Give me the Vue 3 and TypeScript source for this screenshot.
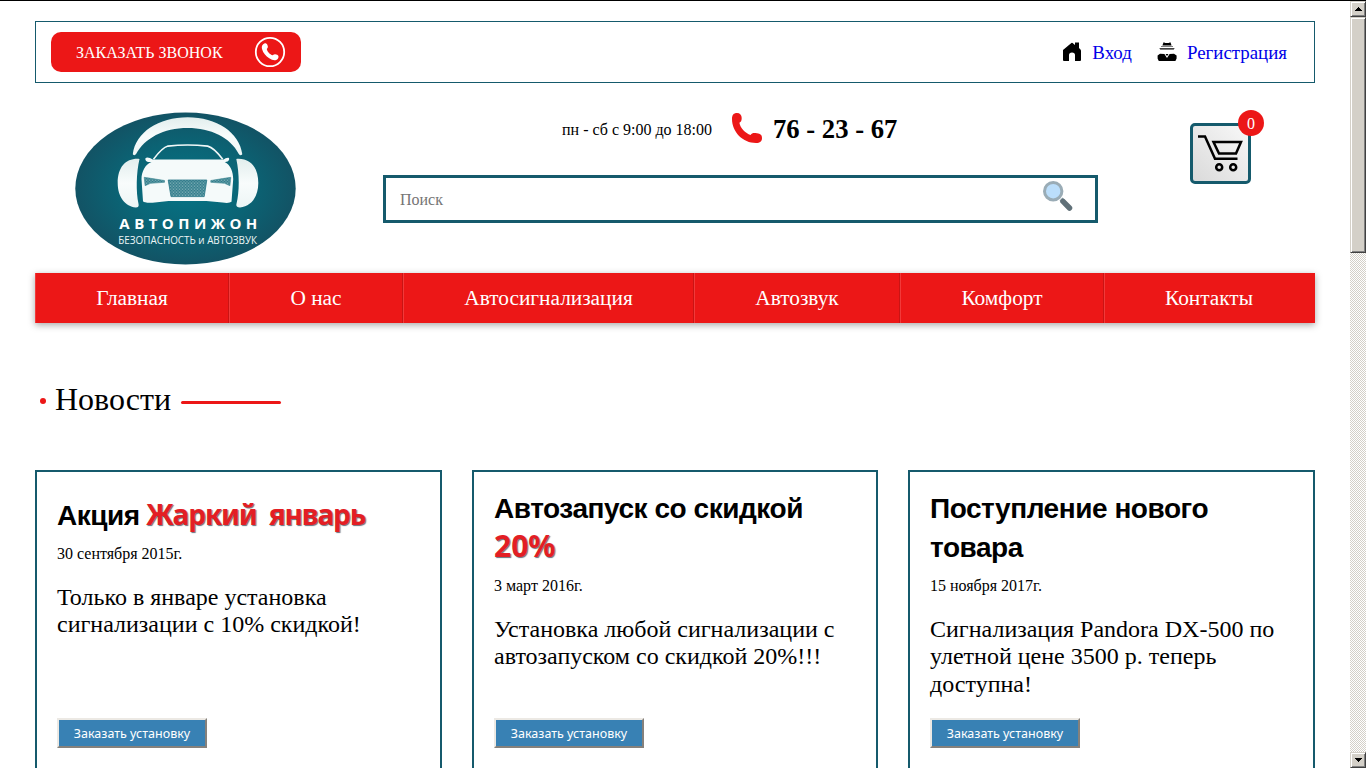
<script setup lang="ts">
interface NewsItem {
  title: string
  accent?: string
  wide?: boolean
  date: string
  text: string[]
}

const menu: string[] = ['Главная', 'О нас', 'Автосигнализация', 'Автозвук', 'Комфорт', 'Контакты']

const news: NewsItem[] = [
  { title: 'Акция', accent: 'Жаркий январь', wide: true, date: '30 сентября 2015г.', text: ['Только в январе установка', 'сигнализации с 10% скидкой!'] },
  { title: 'Автозапуск со скидкой', accent: '20%', date: '3 март 2016г.', text: ['Установка любой сигнализации с', 'автозапуском со скидкой 20%!!!'] },
  { title: 'Поступление нового товара', date: '15 ноября 2017г.', text: ['Сигнализация Pandora DX-500 по', 'улетной цене 3500 р. теперь', 'доступна!'] },
]
</script>

<template>
  <div class="window">
    <div class="page">
      <div class="topbar">
        <button class="call">
          <span>ЗАКАЗАТЬ ЗВОНОК</span>
          <svg width="32" height="32" viewBox="0 0 32 32">
            <circle cx="16" cy="16" r="14.2" fill="none" stroke="#fff" stroke-width="1.8" />
            <path d="M9.2 8.2C10.8 6.8 12.6 7.2 13.3 8.8C14.1 10.6 14.2 11.8 12.8 13C13.2 15.7 15.8 18.5 18.7 19.3C20 18 21.5 17.9 23.2 18.8C24.8 19.7 25 21.5 23.7 22.9C21.8 24.8 18.6 24.5 15.2 22.3C11.8 20.1 9.1 16.8 8.1 13.2C7.5 11.1 7.7 9.4 9.2 8.2Z" fill="#fff" />
          </svg>
        </button>
        <div class="account">
          <a class="login" href="#">
            <svg width="20" height="21" viewBox="0 0 20 21">
              <path d="M1 9L9.4 2Q10 1.5 10.6 2L13 4V1.5H17V7L18.5 8.5Q19 9 19 10V19Q19 20 18 20H13V14Q13 11.5 10 11.5Q7 11.5 7 14V20H2Q1 20 1 19Z" fill="#000" />
            </svg>
            <span>Вход</span>
          </a>
          <a class="register" href="#">
            <svg width="20" height="21" viewBox="0 0 20 21">
              <path d="M5.4 4.4L6.6 1.2L8.4 2H11.6L13.4 1.2L14.6 4.4ZM4 5.4H16V6H4ZM2.3 7.2H17.7L16.7 8.4H3.3ZM.6 14.5L3 12.7L7.4 13L10 17L12.6 13L17 12.7L19.6 14.5V17.5L18.4 20H1.8L.6 17.5Z" fill="#000" />
              <path d="M8.6 13H11.4L10.7 14.6H9.3Z" fill="#000" />
            </svg>
            <span>Регистрация</span>
          </a>
        </div>
      </div>

      <header class="header">
        <svg class="logo" width="221" height="153" viewBox="75.5 111.7 221 153">
          <defs>
            <radialGradient id="oval" cx="50%" cy="50%" r="55%">
              <stop offset="0" stop-color="#057486" />
              <stop offset=".55" stop-color="#0b6374" />
              <stop offset="1" stop-color="#144f61" />
            </radialGradient>
            <linearGradient id="shell" x1="0" y1="0" x2="0" y2="1">
              <stop offset="0" stop-color="#e2eeed" />
              <stop offset=".5" stop-color="#f8fcfc" />
              <stop offset="1" stop-color="#edf5f5" />
            </linearGradient>
            <pattern id="mesh" width="3" height="3" patternUnits="userSpaceOnUse">
              <rect width="3" height="3" fill="#146a7b" />
              <path d="M0 0L3 3M3 0L0 3" stroke="#c2dadd" stroke-width=".55" />
            </pattern>
          </defs>
          <ellipse cx="186" cy="188.2" rx="110.2" ry="76" fill="url(#oval)" />
          <g fill="url(#shell)">
            <path d="M133.3 154C136 132 159 117 188.2 117C217 117 240 132 242.8 154Q241 156 239.3 153.7C231 137 211 127.7 188.2 127.7C164 127.7 145 138 136.6 153.8Q135 156 133.3 154Z" />
            <path d="M140 158.6C127 157.5 118.2 166 118.2 182.8C118.2 197 126 206.5 136.2 207.2Q140 207.3 139 203.5C136.4 191 136.7 173 140 158.6Z" />
            <path d="M236.8 158.6C250 157.5 258.8 166 258.8 182.8C258.8 197 251 206.5 240.6 207.2Q236 207.3 237 203.5C240 191 240 173 236.8 158.6Z" />
          </g>
          <path d="M154 159C160 151 164 147 168.5 145.8C181 144.3 195 144.3 208.2 145.8C213 147 217.3 151 223.2 159" fill="none" stroke="#f1f8f8" stroke-width="1.6" />
          <path d="M153.2 159.3H224C226 157.5 230.5 156 229.6 159.3C229 161.6 226.5 161.7 225.2 161.6C231 164.5 233.7 171 233.7 179L232 201.5Q230 203.2 223 202.3L207 200.8H169L153 202.4Q145 202.8 143.5 201L142 179C142 171 146 164 152 161.7C149.5 162 146.8 161.6 146 159.6C145 156 150 156.7 153.2 159.3Z" fill="#f5fafa" />
          <path d="M144.7 177L153 178.3L165 180.2V182L151 183L145.6 185.4ZM231.3 177L223 178.3L211.3 180.2V182L225 183L230.4 185.4Z" fill="url(#mesh)" stroke="#3b8491" stroke-width=".6" />
          <path d="M168.7 179.7H207.3L204.7 196.3H171.5Z" fill="url(#mesh)" stroke="#267585" stroke-width=".8" />
          <text x="119.8" y="229" textLength="138" class="brand">АВТОПИЖОН</text>
          <text x="118.8" y="243.7" textLength="138.8" lengthAdjust="spacingAndGlyphs" class="tagline">БЕЗОПАСНОСТЬ и АВТОЗВУК</text>
        </svg>

        <div class="contact">
          <div class="phone-row">
            <span class="hours">пн - сб с 9:00 до 18:00</span>
            <svg width="30" height="30" viewBox="0 0 30 30">
              <path d="M0 6C0 2 1.6 0 5 0C8 0 9.7 2 9.7 5C9.7 8 8.9 8.8 7.4 9.8C8.3 15 13.4 20.4 18.6 22C20 20 21.6 19.6 25 20.3C28.5 21 30 22 30 25C30 28.5 28 30 24 30C11 30 0 19 0 6Z" fill="#ec1717" />
            </svg>
            <strong>76 - 23 - 67</strong>
          </div>
          <div class="search">
            <input type="text" placeholder="Поиск" aria-label="Поиск" />
            <svg width="34" height="34" viewBox="0 0 34 34">
              <path d="M20 20L23 23" stroke="#8ba0aa" stroke-width="4" />
              <circle cx="12.2" cy="12.2" r="8.7" fill="#bbdefb" stroke="#9aacb6" stroke-width="3" />
              <path d="M22 22.4L28.5 29" stroke="#607078" stroke-width="5.5" stroke-linecap="round" />
            </svg>
          </div>
        </div>

        <a class="cart" href="#">
          <svg width="46" height="38" viewBox="0 0 46 38">
            <g fill="none" stroke="#000" stroke-width="2.5">
              <path d="M0 1.5H7L17 23.8H39.5M15.5 7H43L38 18.5H21Z" />
              <circle cx="21.2" cy="32.2" r="3" />
              <circle cx="35.2" cy="32.2" r="3" />
            </g>
          </svg>
          <span class="count">0</span>
        </a>
      </header>

      <nav class="menu">
        <a v-for="item in menu" :key="item" href="#">{{ item }}</a>
      </nav>

      <h2 class="section-title"><i class="dot"></i><span>Новости</span><i class="line"></i></h2>

      <section class="news">
        <article v-for="item in news" :key="item.date">
          <h3 :class="{ wide: item.wide }">{{ item.title }} <em v-if="item.accent">{{ item.accent }}</em></h3>
          <time>{{ item.date }}</time>
          <p><span v-for="line in item.text" :key="line">{{ line }}</span></p>
          <button class="order">Заказать установку</button>
        </article>
      </section>
    </div>

    <aside class="scrollbar">
      <div class="bevel arrow"><svg width="7" height="4" viewBox="0 0 7 4" shape-rendering="crispEdges"><path d="M3 0H4V1H5V2H6V3H7V4H0V3H1V2H2V1H3Z" /></svg></div>
      <div class="bevel thumb"></div>
      <div class="track"></div>
      <div class="bevel arrow"><svg width="7" height="4" viewBox="0 0 7 4" shape-rendering="crispEdges"><path d="M0 0H7V1H6V2H5V3H4V4H3V3H2V2H1V1H0Z" /></svg></div>
    </aside>
  </div>
</template>

<style>
body { margin: 0; overflow: hidden; }
</style>

<style scoped>
* { box-sizing: border-box; }
.window {
  display: flex;
  height: 768px;
  overflow: hidden;
  border-top: 1px solid #000;
  background: #fff;
  color: #000;
  font-family: "Liberation Serif", "Times New Roman", serif;
}
.page { width: 1350px; padding: 20px 35px 0; overflow: hidden; }
.topbar {
  display: flex;
  align-items: center;
  justify-content: space-between;
  height: 62px;
  padding: 0 27px 0 15px;
  border: 1px solid #155a6c;
}
.call {
  display: flex;
  align-items: center;
  justify-content: space-between;
  width: 250px;
  height: 40px;
  padding: 0 15px 0 25px;
  border: 0;
  border-radius: 10px;
  background: #ec1717;
  color: #fff;
  font: 16px "Liberation Serif", serif;
}
.call span { padding-top: 2px; white-space: nowrap; }
.account { display: flex; gap: 25px; font-size: 18.9px; }
.account a { display: flex; align-items: center; gap: 10px; color: #0000e8; text-decoration: none; white-space: nowrap; }
.account svg { margin-top: -2px; }
.account span { padding-top: 2px; }
.header { display: flex; height: 190px; }
.logo { flex: none; margin: 29px 0 0 40px; }
.contact { width: 715px; margin-left: 87px; }
.phone-row { display: flex; align-items: center; height: 92px; padding-left: 179px; white-space: nowrap; }
.phone-row svg { margin-top: -2px; }
.hours { width: 170px; padding-top: 2px; }
.phone-row strong { margin-left: 11px; font-size: 26.67px; }
.search { display: flex; justify-content: space-between; height: 48px; padding: 1px 20px 0 14px; border: 3px solid #155a6c; }
.search input { width: 500px; padding: 0; border: 0; outline: 0; background: none; font: 16px "Liberation Serif", serif; }
.search input::placeholder { color: #757575; opacity: 1; }
.cart {
  position: relative;
  width: 61px;
  height: 61px;
  margin: 40px 0 0 92px;
  padding: 9px 5px;
  border: 3px solid #155a6c;
  border-radius: 5px;
  background: linear-gradient(45deg, #dadada, #f8f8f8);
}
.count {
  position: absolute;
  top: -16px;
  right: -16px;
  width: 26px;
  height: 26px;
  border-radius: 50%;
  background: #ec1717;
  color: #fff;
  line-height: 27px;
  text-align: center;
}
.brand { fill: #fff; font: bold 15px "Open Sans", sans-serif; }
.tagline { fill: #edf6f6; font: 10px "Open Sans", sans-serif; }
.menu {
  display: grid;
  grid-template-columns: 194px 174px 291px 206px 204px 211px;
  height: 50px;
  background: #ec1717;
  box-shadow: 0 2px 7px rgba(0, 0, 0, .35);
}
.menu a {
  border-right: 1px solid #c91414;
  border-left: 1px solid #f23a3a;
  color: #fff;
  font-size: 21.33px;
  line-height: 50px;
  text-align: center;
  text-decoration: none;
  white-space: nowrap;
}
.menu a:last-child { padding-right: 2px; border-right: 0; }
.section-title { display: flex; align-items: center; height: 40px; margin: 57px 0 0 5px; font-size: 32px; font-weight: 400; }
.section-title span { margin: 0 10px 0 9px; padding-bottom: 2px; }
.dot { width: 6px; height: 6px; margin-top: 2px; border-radius: 50%; background: #ec1717; }
.line { width: 100px; height: 3px; margin-top: 4px; border-radius: 2px; background: #ec1717; }
.news { display: grid; grid-template-columns: 407px 406px 407px; justify-content: space-between; margin-top: 50px; }
.news article { display: flex; flex-direction: column; height: 360px; padding: 17px 18px 0 20px; border: 2px solid #155a6c; }
h3 { margin: 0; font: bold 28px/39px "Liberation Sans", Arial, sans-serif; letter-spacing: -.45px; }
h3.wide { padding-top: 7px; }
h3 em { color: #e31e24; font: bold 30px/0 "Comic Sans MS", "Noto Sans", sans-serif; letter-spacing: 0; text-shadow: 1px 1px 1px #69707c; }
.wide em { margin-left: -1px; font-size: 28px; letter-spacing: -1.1px; word-spacing: 6px; }
time { margin-top: 10px; line-height: 18px; }
.news p { margin: 21px 0 0; font-size: 24px; line-height: 27.4px; }
.news p span { display: block; white-space: nowrap; }
.order {
  width: 150px;
  height: 30px;
  margin: auto 0 80px;
  padding: 0;
  border: 2px solid;
  border-color: #ece9e4 #85817c #85817c #ece9e4;
  background: #3881b4;
  color: #fff;
  font: 12.5px "Noto Sans", Tahoma, sans-serif;
  white-space: nowrap;
}
.scrollbar { display: flex; flex-direction: column; width: 16px; height: 767px; background: #d4d0c8; }
.bevel {
  border: 1px solid;
  border-color: #d4d0c8 #404040 #404040 #d4d0c8;
  background: #d4d0c8;
  box-shadow: inset 1px 1px #fff, inset -1px -1px #808080;
}
.arrow { display: flex; align-items: center; justify-content: center; height: 16px; }
.arrow svg { display: block; }
.thumb { height: 236px; }
.track { flex: 1; background: repeating-conic-gradient(#d4d0c8 0 25%, #fff 0 50%) 0 0 / 2px 2px; }
</style>
